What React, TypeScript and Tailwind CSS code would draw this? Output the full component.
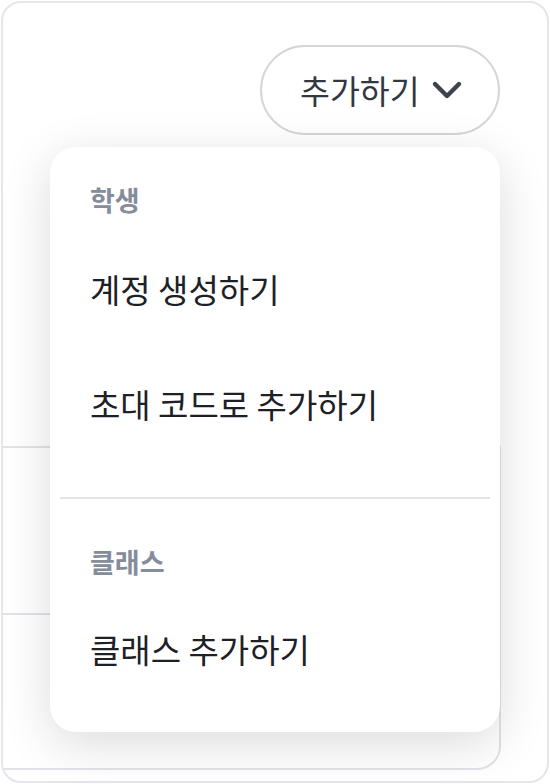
const font = { fontFamily: '"Noto Sans CJK KR", "Noto Sans", sans-serif' };

function MenuLabel({ children }: { children: string }) {
    return (
        <div className="h-[60px] flex items-center pl-10 text-[27px] font-semibold text-[#858c9a]">
            {children}
        </div>
    );
}

function MenuItem({ children, h }: { children: string; h: string }) {
    return (
        <div className={`${h} flex items-center pl-10 text-[33px] text-[#1d2127]`}>{children}</div>
    );
}

export default function App() {
    return (
        <div className="relative w-[550px] h-[784px] bg-white overflow-hidden" style={font}>
            <div className="absolute inset-x-[1px] top-[1px] h-[782px] border-2 border-[#e5e5ea] rounded-[20px] overflow-hidden flex flex-col">
                <div className="flex justify-end pr-[47px] pt-[42px]">
                    <button className="w-[240px] h-[90px] rounded-full border-2 border-[#d4d6dc] bg-white flex items-center pl-[38px] gap-[11px] text-[32.5px] text-[#33373f]">
                        추가하기
                        <svg width="32" height="20" viewBox="0 0 32 20" fill="none">
                            <polyline
                                points="4,4 16,16 28,4"
                                stroke="#3d424b"
                                strokeWidth="4.4"
                                strokeLinecap="round"
                                strokeLinejoin="round"
                            />
                        </svg>
                    </button>
                </div>

                {/* list behind the menu */}
                <div className="w-[498px] mt-[311px] border-r-2 border-b-2 border-[#e2e2e7] rounded-br-[24px] flex flex-col">
                    <div className="h-[167px] border-t-2 border-[#e2e2e7]" />
                    <div className="h-[155px] border-t-2 border-[#e2e2e7]" />
                </div>
            </div>

            <div className="absolute left-[50px] top-[147px] w-[450px] h-[585px] bg-white rounded-[26px] shadow-[0_12px_50px_rgba(0,0,0,0.14)] flex flex-col pt-[23px]">
                <MenuLabel>학생</MenuLabel>
                <MenuItem h="h-[120px]">계정 생성하기</MenuItem>
                <MenuItem h="h-[110px]">초대 코드로 추가하기</MenuItem>
                <div className="mx-[10px] mt-[37px] h-[2px] bg-[#e4e4e8]" />
                <div className="mt-[33px]">
                    <MenuLabel>클래스</MenuLabel>
                </div>
                <MenuItem h="h-[116px]">클래스 추가하기</MenuItem>
            </div>
        </div>
    );
}
